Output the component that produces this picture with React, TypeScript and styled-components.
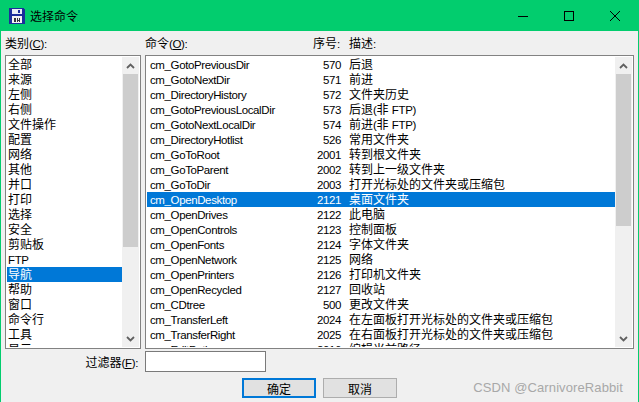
import React from 'react';
import styled, { createGlobalStyle } from 'styled-components';

const GlobalStyle = createGlobalStyle`
  html, body { margin: 0; padding: 0; background: #f0f0f0; }
  body { width: 639px; height: 402px; overflow: hidden; }
`;

const FONT = `"Liberation Sans", "Noto Sans CJK SC", sans-serif`;

const Win = styled.div`
  width: 639px;
  height: 402px;
  box-sizing: border-box;
  border-left: 1px solid #02cd6e;
  border-right: 1px solid #02cd6e;
  background: #f0f0f0;
  font-family: ${FONT};
  font-size: 12px;
  color: #000;
  display: flex;
  flex-direction: column;
  position: relative;
  overflow: hidden;
`;

const TitleBar = styled.div`
  height: 31px;
  margin: 0 -1px;
  padding: 0 1px 0 9px;
  background: #02cd6e;
  display: flex;
  align-items: center;
  flex-shrink: 0;
`;

const TitleText = styled.span`
  margin-left: 5px;
`;

const WinButtons = styled.div`
  margin-left: auto;
  display: flex;
`;

const WinButton = styled.div`
  width: 46px;
  height: 31px;
  display: flex;
  align-items: center;
  justify-content: center;
`;

const Body = styled.div`
  height: 318px;
  flex: none;
  display: grid;
  grid-template-columns: 136px 1fr;
  column-gap: 4px;
  padding-left: 4px;
`;

const Column = styled.div`
  display: flex;
  flex-direction: column;
  min-width: 0;
  min-height: 0;
`;

const HeadRow = styled.div`
  height: 24px;
  flex: none;
  display: flex;
  align-items: center;
  padding-bottom: 1px;
  box-sizing: border-box;
`;

const Head = styled.span<{ $w?: number }>`
  ${p => (p.$w ? `width: ${p.$w}px;` : '')}
  white-space: nowrap;
`;

const Lat = styled.span`
  font-size: 11.5px;
  letter-spacing: -0.35px;
`;

const ListBox = styled.div<{ $mr?: number }>`
  flex: 1;
  min-height: 0;
  box-sizing: border-box;
  border: 1px solid #828282;
  padding: 1px;
  background: #fff;
  display: flex;
  overflow: hidden;
  margin-right: ${p => p.$mr ?? 0}px;
`;

const Rows = styled.div`
  flex: 1;
  min-width: 0;
  overflow: hidden;
`;

const Row = styled.div<{ $sel?: boolean }>`
  height: 15px;
  line-height: 16px;
  display: flex;
  white-space: nowrap;
  background: ${p => (p.$sel ? '#0078d7' : 'transparent')};
  color: ${p => (p.$sel ? '#fff' : '#000')};
`;

const CatName = styled.span`
  padding-left: 1px;
`;

const CmdName = styled.span`
  width: 160px;
  padding-left: 3px;
  box-sizing: border-box;
  font-size: 11.5px;
  letter-spacing: -0.38px;
`;

const CmdNum = styled.span`
  width: 34px;
  text-align: right;
  font-size: 11.5px;
  letter-spacing: -0.4px;
`;

const CmdDesc = styled.span`
  margin-left: 8px;
`;

const Scrollbar = styled.div`
  width: 17px;
  flex: none;
  background: #f0f0f0;
  display: flex;
  flex-direction: column;
`;

const ScrollArrow = styled.div`
  height: 17px;
  display: flex;
  align-items: center;
  justify-content: center;
  flex: none;
`;

const ScrollTrack = styled.div`
  flex: 1;
`;

const Thumb = styled.div<{ $h: number }>`
  height: ${p => p.$h}px;
  margin: 0 1px;
  background: #cdcdcd;
`;

const FilterRow = styled.div`
  display: flex;
  align-items: center;
  height: 21px;
  flex: none;
  margin-top: 2px;
  padding-left: 4px;
`;

const FilterLabel = styled.span`
  width: 140px;
  padding-right: 7px;
  box-sizing: border-box;
  text-align: right;
`;

const FilterInput = styled.div`
  width: 121px;
  height: 21px;
  box-sizing: border-box;
  border: 1px solid #7a7a7a;
  background: #fff;
`;

const ButtonRow = styled.div`
  display: flex;
  gap: 7px;
  padding-left: 241px;
  margin-top: 6px;
`;

const Btn = styled.div<{ $def?: boolean }>`
  width: 74px;
  height: 20px;
  box-sizing: border-box;
  border: ${p => (p.$def ? '2px solid #0078d7' : '1px solid #adadad')};
  background: #e1e1e1;
  display: flex;
  align-items: center;
  justify-content: center;
`;

const Watermark = styled.span`
  position: absolute;
  right: 15px;
  bottom: 7px;
  color: #a8a8a8;
  font-size: 13px;
  letter-spacing: 0.1px;
`;

const U = styled.span`
  text-decoration: underline;
`;

const categories = [
  '全部', '来源', '左侧', '右侧', '文件操作', '配置', '网络', '其他', '并口', '打印', '选择', '安全',
  '剪贴板', 'FTP', '导航', '帮助', '窗口', '命令行', '工具', '显示',
];

const commands: [string, string, React.ReactNode][] = [
  ['cm_GotoPreviousDir', '570', '后退'],
  ['cm_GotoNextDir', '571', '前进'],
  ['cm_DirectoryHistory', '572', '文件夹历史'],
  ['cm_GotoPreviousLocalDir', '573', <>后退<Lat>(</Lat>非 <Lat>FTP)</Lat></>],
  ['cm_GotoNextLocalDir', '574', <>前进<Lat>(</Lat>非 <Lat>FTP)</Lat></>],
  ['cm_DirectoryHotlist', '526', '常用文件夹'],
  ['cm_GoToRoot', '2001', '转到根文件夹'],
  ['cm_GoToParent', '2002', '转到上一级文件夹'],
  ['cm_GoToDir', '2003', '打开光标处的文件夹或压缩包'],
  ['cm_OpenDesktop', '2121', '桌面文件夹'],
  ['cm_OpenDrives', '2122', '此电脑'],
  ['cm_OpenControls', '2123', '控制面板'],
  ['cm_OpenFonts', '2124', '字体文件夹'],
  ['cm_OpenNetwork', '2125', '网络'],
  ['cm_OpenPrinters', '2126', '打印机文件夹'],
  ['cm_OpenRecycled', '2127', '回收站'],
  ['cm_CDtree', '500', '更改文件夹'],
  ['cm_TransferLeft', '2024', '在左面板打开光标处的文件夹或压缩包'],
  ['cm_TransferRight', '2025', '在右面板打开光标处的文件夹或压缩包'],
  ['cm_EditPath', '2016', '编辑当前路径'],
];

const FloppyIcon = () => (
  <svg width="16" height="16" viewBox="0 0 16 16" shapeRendering="crispEdges">
    <path d="M0 0H14L16 2V16H0Z" fill="#1c2f9c" />
    <rect x="3" y="1" width="10" height="5" fill="#e9edf5" />
    <rect x="9" y="2" width="2" height="3" fill="#1c2f9c" />
    <rect x="3" y="8" width="10" height="7" fill="#f4f4f4" />
    <rect x="5" y="10" width="2" height="4" fill="#34343c" />
    <rect x="8" y="10" width="1" height="4" fill="#34343c" />
    <rect x="10" y="10" width="1" height="4" fill="#34343c" />
    <rect x="8" y="12" width="3" height="1" fill="#34343c" />
  </svg>
);

const ArrowUp = () => (
  <svg width="9" height="6" viewBox="0 0 9 6">
    <path d="M1 5 L4.5 1.6 L8 5" fill="none" stroke="#606060" strokeWidth="1.8" />
  </svg>
);

const ArrowDown = () => (
  <svg width="9" height="6" viewBox="0 0 9 6">
    <path d="M1 1 L4.5 4.4 L8 1" fill="none" stroke="#606060" strokeWidth="1.8" />
  </svg>
);

const VScroll = ({ thumb }: { thumb: number }) => (
  <Scrollbar>
    <ScrollArrow><ArrowUp /></ScrollArrow>
    <ScrollTrack><Thumb $h={thumb} /></ScrollTrack>
    <ScrollArrow><ArrowDown /></ScrollArrow>
  </Scrollbar>
);

export default function App() {
  return (
    <>
      <GlobalStyle />
      <Win>
        <TitleBar>
          <FloppyIcon />
          <TitleText>选择命令</TitleText>
          <WinButtons>
            <WinButton>
              <svg width="10" height="10" viewBox="0 0 10 10"><rect x="0" y="5" width="10" height="1" fill="#000" /></svg>
            </WinButton>
            <WinButton>
              <svg width="10" height="10" viewBox="0 0 10 10"><rect x="0.5" y="0.5" width="9" height="9" fill="none" stroke="#000" /></svg>
            </WinButton>
            <WinButton>
              <svg width="10" height="10" viewBox="0 0 10 10"><path d="M0 0 L10 10 M10 0 L0 10" stroke="#000" strokeWidth="1" /></svg>
            </WinButton>
          </WinButtons>
        </TitleBar>
        <Body>
          <Column>
            <HeadRow><Head>类别<Lat>(<U>C</U>):</Lat></Head></HeadRow>
            <ListBox>
              <Rows>
                {categories.map(c => (
                  <Row key={c} $sel={c === '导航'}>
                    <CatName>{c === 'FTP' ? <Lat>{c}</Lat> : c}</CatName>
                  </Row>
                ))}
              </Rows>
              <VScroll thumb={173} />
            </ListBox>
          </Column>
          <Column>
            <HeadRow>
              <Head $w={168}>命令<Lat>(<U>O</U>):</Lat></Head>
              <Head $w={36}>序号<Lat>:</Lat></Head>
              <Head>描述<Lat>:</Lat></Head>
            </HeadRow>
            <ListBox $mr={4}>
              <Rows>
                {commands.map(([name, num, desc]) => (
                  <Row key={name} $sel={name === 'cm_OpenDesktop'}>
                    <CmdName>{name}</CmdName>
                    <CmdNum>{num}</CmdNum>
                    <CmdDesc>{desc}</CmdDesc>
                  </Row>
                ))}
              </Rows>
              <VScroll thumb={152} />
            </ListBox>
          </Column>
        </Body>
        <FilterRow>
          <FilterLabel>过滤器<Lat>(<U>F</U>):</Lat></FilterLabel>
          <FilterInput />
        </FilterRow>
        <ButtonRow>
          <Btn $def>确定</Btn>
          <Btn>取消</Btn>
        </ButtonRow>
        <Watermark>CSDN @CarnivoreRabbit</Watermark>
      </Win>
    </>
  );
}
